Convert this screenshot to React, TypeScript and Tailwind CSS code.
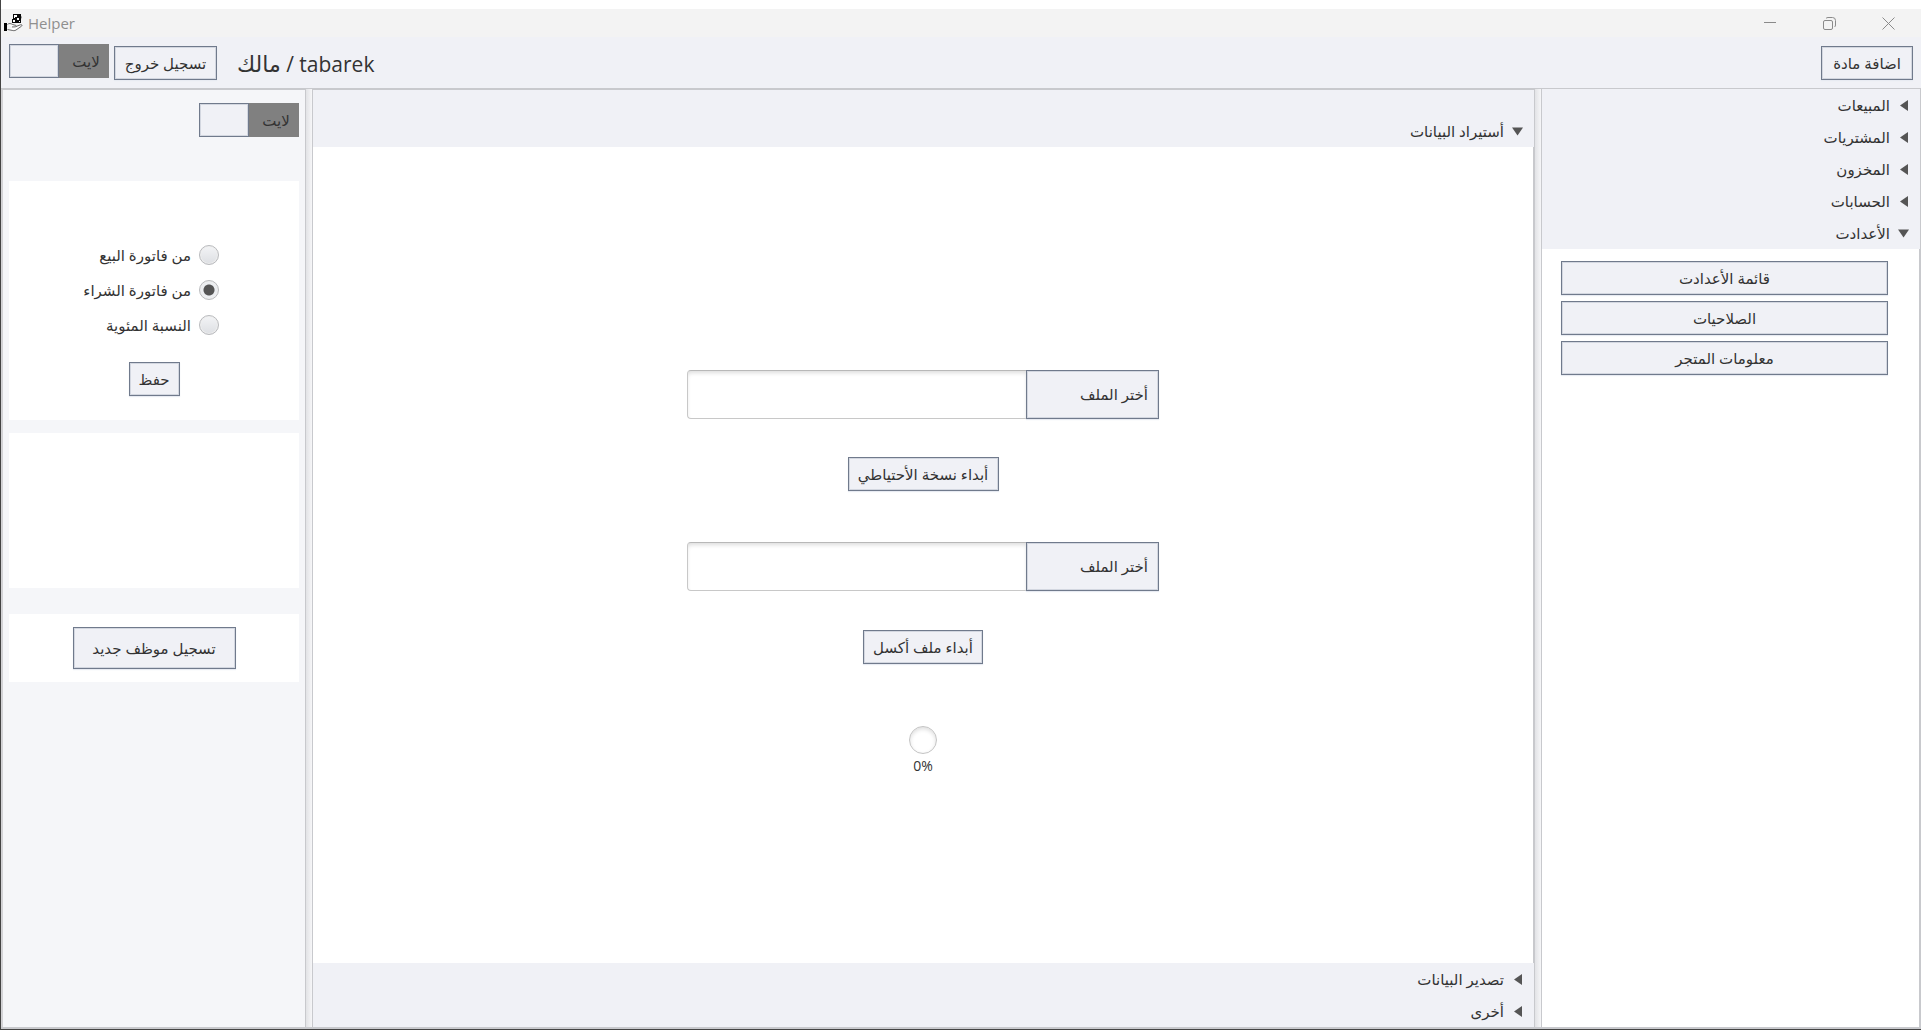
import { useState } from "react";

const buttonLook =
  "flex items-center justify-center whitespace-nowrap border border-[#707a8c] bg-[#f0f1f6] text-[15px] leading-none text-[#333] shadow-[inset_0_0_0_1px_#d3d7e0,0_1px_1px_#e8ebf2]";

function Logo() {
  return (
    <svg width="20" height="20" viewBox="0 0 20 20" aria-hidden="true">
      <path d="M9 1h8v2l.5 1-.5 2v4H8V6h1z" fill="#0a0a0a" />
      <path d="M10 2h3v2h-2v1h-1zM13 5h2v2h-2zM9 7h2v2H9zM15 8h1v1h-1z" fill="#fff" />
      <path d="M0 10h3v8H0z" fill="#000" />
      <path
        d="M3.500 11.500c1.500-1.500 3.500-1 5 0l3 .8c1 .3.800 1.500-.3 1.600H8m4-.4 4.500-1.700c1.500-.3 2 .6 1 1.400l-5.500 3.800c-1.200.8-2.500.8-3.800.4L3.500 16.500"
        fill="#fff"
        stroke="#444"
        strokeWidth=".8"
      />
    </svg>
  );
}

function ThemeToggle() {
  const [on, setOn] = useState(true);
  return (
    <button
      type="button"
      role="switch"
      aria-checked={on}
      onClick={() => setOn(!on)}
      className="flex h-[34px] w-[100px] shrink-0 bg-[#808080] text-[15px] leading-none text-[#333]"
    >
      <span className="h-full w-[50px] border border-[#707a8c] bg-[#f0f1f6] shadow-[inset_0_0_0_1px_#d3d7e0]" />
      <span className="flex h-full flex-1 items-center justify-center pl-1">لايت</span>
    </button>
  );
}

function Arrow({ open }: { open: boolean }) {
  return (
    <svg width="11" height="11" viewBox="0 0 11 11" fill="#555" aria-hidden="true">
      {open ? <path d="M0 1.500h11L5.500 9.500z" /> : <path d="M10 0v11L2 5.500z" />}
    </svg>
  );
}

function SectionHeader({ label, open = false }: { label: string; open?: boolean }) {
  return (
    <button
      type="button"
      dir="rtl"
      aria-expanded={open}
      className="flex h-8 w-full shrink-0 items-center gap-2 bg-[#f0f1f6] px-[11px] text-[15px] leading-none text-[#333]"
    >
      <Arrow open={open} />
      <span>{label}</span>
    </button>
  );
}

function Splitter() {
  return <div className="w-2 shrink-0 border-x border-[#c8c9cd] bg-linear-to-r from-[#e2e3e6] to-[#f6f6f8]" />;
}

function FilePicker({ id }: { id: string }) {
  return (
    <div className="flex h-[49px]">
      <input
        id={id}
        type="text"
        dir="rtl"
        aria-label="أختر الملف"
        className="w-[339px] rounded-l border border-r-0 border-[#c8c8c8] border-t-[#b8b8b8] bg-white px-2 shadow-[inset_0_3px_4px_-1px_#ddd] outline-none"
      />
      <button type="button" dir="rtl" className={`${buttonLook} w-[133px] !justify-start px-[10px]`}>
        أختر الملف
      </button>
    </div>
  );
}

const sections = ["المبيعات", "المشتريات", "المخزون", "الحسابات"];
const settings = ["قائمة الأعدادت", "الصلاحيات", "معلومات المتجر"];
const sources = ["من فاتورة البيع", "من فاتورة الشراء", "النسبة المئوية"];

export default function App() {
  const [source, setSource] = useState(1);
  return (
    <div className="flex h-screen flex-col border-b border-l border-[#444] bg-white pt-[9px] font-['Open_Sans','DejaVu_Sans',sans-serif] text-[#333]">
      <header className="flex h-7 shrink-0 items-center bg-[#f3f3f3] pl-[3px] text-[#8f8f8f]">
        <Logo />
        <span className="ml-1 text-[15px] leading-none">Helper</span>
        <div className="ml-auto flex items-center gap-[46px] pr-[26px]">
          <button type="button" aria-label="Minimize">
            <svg width="13" height="13" viewBox="0 0 13 13" stroke="#8a8a8a" fill="none">
              <path d="M0 5.500h12" />
            </svg>
          </button>
          <button type="button" aria-label="Restore">
            <svg width="13" height="13" viewBox="0 0 13 13" stroke="#8a8a8a" fill="none">
              <rect x=".5" y="3.500" width="9" height="9" rx="1.500" />
              <path d="M3 1.500C3.500.8 4 .5 5 .5h4.500a3 3 0 0 1 3 3V8c0 1-.3 1.500-1 2" />
            </svg>
          </button>
          <button type="button" aria-label="Close">
            <svg width="13" height="13" viewBox="0 0 13 13" stroke="#8a8a8a" fill="none">
              <path d="m.5.5 12 12m0-12-12 12" />
            </svg>
          </button>
        </div>
      </header>

      <div className="flex h-[52px] shrink-0 items-start border-b border-[#c8c9cd] bg-[#f0f1f6] px-2 pt-[7px]">
        <ThemeToggle />
        <button type="button" className={`${buttonLook} mt-[2px] ml-[5px] h-[34px] w-[103px]`}>
          تسجيل خروج
        </button>
        <h1 className="mt-[2px] ml-5 flex h-[34px] items-center text-[21px] leading-none">
          <span dir="ltr">
            <bdi className="text-[22px]">مالك</bdi> / tabarek
          </span>
        </h1>
        <button type="button" className={`${buttonLook} mt-[2px] ml-auto h-[34px] w-[92px]`}>
          اضافة مادة
        </button>
      </div>

      <div className="flex min-h-0 flex-1 border-b-2 border-[#c8c9cd]">
        <aside className="flex w-[304px] shrink-0 flex-col border-t border-l-2 border-t-[#c8c9cd] border-l-[#d3d3d6] bg-[#f5f6f9] px-[6px]">
          <div className="mt-[13px] flex justify-end">
            <ThemeToggle />
          </div>
          <div className="mt-11 flex h-[239px] flex-col items-center bg-white pt-16">
            <div role="radiogroup" aria-label="المصدر" className="mr-20 flex flex-col gap-[15px] self-end">
              {sources.map((label, i) => (
                <label key={label} dir="rtl" className="flex h-5 items-center gap-2 text-[15px] leading-none">
                  <input
                    type="radio"
                    name="source"
                    checked={source === i}
                    onChange={() => setSource(i)}
                    className="size-5 appearance-none rounded-full border border-[#b9babd] bg-linear-to-b from-[#f3f4f6] to-[#dddfe3] shadow-[inset_0_0_0_1px_#eee] checked:bg-[radial-gradient(circle,#555_5px,#eceef1_6px)]"
                  />
                  {label}
                </label>
              ))}
            </div>
            <button type="button" className={`${buttonLook} mt-[27px] h-[34px] w-[51px]`}>
              حفظ
            </button>
          </div>
          <div className="mt-[13px] h-[155px] bg-white" />
          <div className="mt-[26px] flex justify-center bg-white py-[13px]">
            <button type="button" className={`${buttonLook} h-[42px] w-[163px]`}>
              تسجيل موظف جديد
            </button>
          </div>
        </aside>

        <Splitter />

        <main className="flex min-w-0 flex-1 flex-col border-t border-[#c8c9cd]">
          <div className="bg-[#f0f1f6] pt-[25px]">
            <SectionHeader label="أستيراد البيانات" open />
          </div>
          <div className="flex flex-1 flex-col items-center border-r border-[#c8c9cd] pt-[223px]">
            <FilePicker id="backup-file" />
            <button type="button" dir="rtl" className={`${buttonLook} mt-[38px] mb-[51px] h-[34px] w-[151px]`}>
              أبداء نسخة الأحتياطي
            </button>
            <FilePicker id="excel-file" />
            <button type="button" dir="rtl" className={`${buttonLook} mt-[39px] h-[34px] w-[120px]`}>
              أبداء ملف أكسل
            </button>
            <div
              role="progressbar"
              aria-label="0%"
              aria-valuenow={0}
              className="mt-[62px] size-7 rounded-full border border-[#c4c4c4] shadow-[inset_0_2px_4px_#ddd]"
            />
            <span className="mt-1 text-sm leading-4">0%</span>
          </div>
          <SectionHeader label="تصدير البيانات" />
          <SectionHeader label="أخرى" />
        </main>

        <Splitter />

        <aside className="flex w-[379px] shrink-0 flex-col border-r border-[#c8c9cd]">
          {sections.map((label) => (
            <SectionHeader key={label} label={label} />
          ))}
          <SectionHeader label="الأعدادت" open />
          <div className="flex flex-1 flex-col gap-[6px] border-r border-[#c8c9cd] pt-3 pr-[31px] pl-[19px]">
            {settings.map((label) => (
              <button key={label} type="button" className={`${buttonLook} h-[34px] w-full`}>
                {label}
              </button>
            ))}
          </div>
        </aside>
      </div>
    </div>
  );
}
